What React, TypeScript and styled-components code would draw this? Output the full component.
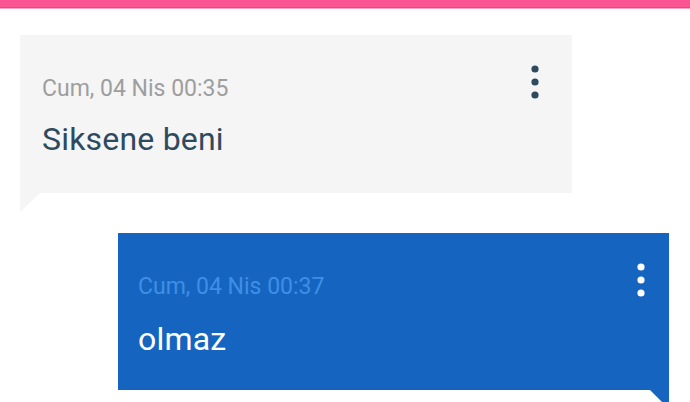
import React from "react";
import styled, { createGlobalStyle } from "styled-components";

const Global = createGlobalStyle`
  html, body { margin: 0; padding: 0; background: #ffffff; }
  body { font-family: Roboto, "Noto Sans", sans-serif; overflow: hidden; }
`;

const Page = styled.div`
  width: 690px;
  height: 402px;
  overflow: hidden;
  display: flex;
  flex-direction: column;
`;

const TopBar = styled.div`
  height: 7px;
  background: #fa5592;
  border-bottom: 1px solid #d84f81;
  box-shadow: 0 1px 0 #f6a6c3;
  flex-shrink: 0;
`;

const Thread = styled.div`
  display: flex;
  flex-direction: column;
  gap: 40px;
  padding: 27px 21px 0 20px;
`;

const Bubble = styled.div<{ $mine?: boolean }>`
  position: relative;
  box-sizing: border-box;
  flex-shrink: 0;
  width: ${(p) => (p.$mine ? "551px" : "552px")};
  height: ${(p) => (p.$mine ? "157px" : "158px")};
  align-self: ${(p) => (p.$mine ? "flex-end" : "flex-start")};
  background: ${(p) => (p.$mine ? "#1565c0" : "#f5f5f5")};
  padding: 27px ${(p) => (p.$mine ? "18px" : "27px")} 0 ${(p) => (p.$mine ? "20px" : "22px")};
  display: flex;
  flex-direction: column;

  &::after {
    content: "";
    position: absolute;
    top: 100%;
    width: 0;
    height: 0;
    ${(p) =>
      p.$mine
        ? `right: 0;
           border-left: 19px solid transparent;
           border-top: 19px solid #1565c0;`
        : `left: 0;
           border-right: 20px solid transparent;
           border-top: 19px solid #f5f5f5;`}
  }
`;

const Header = styled.div`
  display: flex;
  justify-content: space-between;
  align-items: flex-start;
`;

const Time = styled.div<{ $mine?: boolean }>`
  margin-top: 13px;
  font-size: 23px;
  line-height: 27px;
  color: ${(p) => (p.$mine ? "#3f8ee6" : "#9e9e9e")};
`;

const MenuButton = styled.button<{ $mine?: boolean }>`
  width: 20px;
  height: 40px;
  padding: 0;
  border: 0;
  background: none;
  display: flex;
  align-items: center;
  justify-content: center;
  color: ${(p) => (p.$mine ? "#ffffff" : "#2e4a5f")};
`;

const Message = styled.div<{ $mine?: boolean }>`
  margin-top: ${(p) => (p.$mine ? "21px" : "19px")};
  font-size: 32px;
  line-height: 37px;
  letter-spacing: 0.2px;
  color: ${(p) => (p.$mine ? "#ffffff" : "#2e4a5f")};
`;

const Dots = () => (
  <svg width="10" height="40" viewBox="0 0 10 40">
    <circle cx="5" cy="7" r="3.6" fill="currentColor" />
    <circle cx="5" cy="20" r="3.6" fill="currentColor" />
    <circle cx="5" cy="33" r="3.6" fill="currentColor" />
  </svg>
);

const ChatBubble = ({ time, text, mine }: { time: string; text: string; mine?: boolean }) => (
  <Bubble $mine={mine}>
    <Header>
      <Time $mine={mine}>{time}</Time>
      <MenuButton $mine={mine} aria-label="menu">
        <Dots />
      </MenuButton>
    </Header>
    <Message $mine={mine}>{text}</Message>
  </Bubble>
);

export default function App() {
  return (
    <Page>
      <Global />
      <TopBar />
      <Thread>
        <ChatBubble time="Cum, 04 Nis 00:35" text="Siksene beni" />
        <ChatBubble time="Cum, 04 Nis 00:37" text="olmaz" mine />
      </Thread>
    </Page>
  );
}
